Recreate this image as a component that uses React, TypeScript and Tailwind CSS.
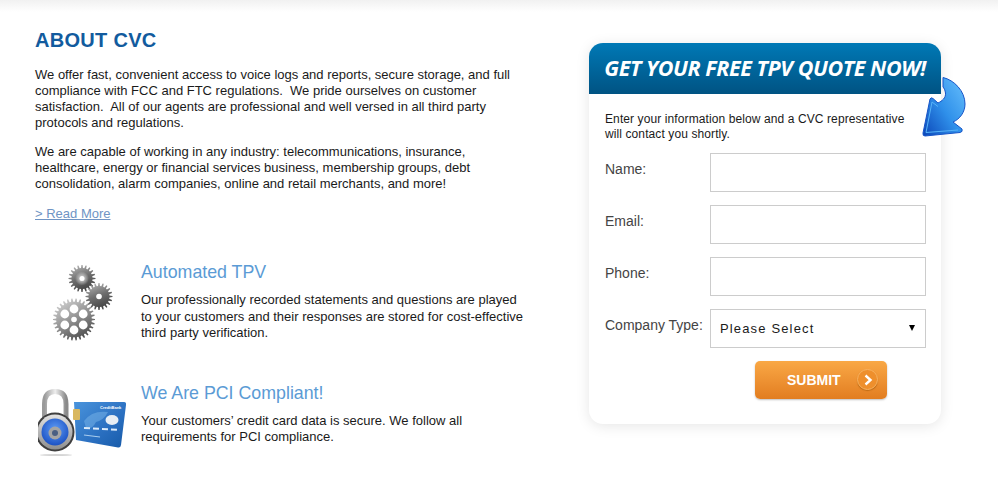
import React from "react";

const gearPath = (cx: number, cy: number, outer: number, inner: number, teeth: number) => {
	const points: string[] = [];
	const step = (Math.PI * 2) / teeth;
	for (let i = 0; i < teeth; i++) {
		const a = i * step;
		const corners: [number, number][] = [
			[inner, a - step * 0.3],
			[outer, a - step * 0.14],
			[outer, a + step * 0.14],
			[inner, a + step * 0.3],
		];
		for (const [r, t] of corners) {
			points.push(`${(cx + r * Math.cos(t)).toFixed(2)},${(cy + r * Math.sin(t)).toFixed(2)}`);
		}
	}
	return `M${points.join("L")}Z`;
};

const GearsIcon = () => (
	<svg width="64" height="76" viewBox="0 0 64 76">
		<defs>
			<linearGradient id="gearSmall" x1="0.2" y1="0" x2="0.6" y2="1">
				<stop offset="0" stopColor="#b5b5b5" />
				<stop offset="0.5" stopColor="#6e6e6e" />
				<stop offset="1" stopColor="#3f3f3f" />
			</linearGradient>
			<radialGradient id="gearGlow" cx="0.5" cy="0.5" r="0.5">
				<stop offset="0" stopColor="#e6e6e6" />
				<stop offset="1" stopColor="#e6e6e6" stopOpacity="0" />
			</radialGradient>
			<linearGradient id="gearBig" x1="0.1" y1="0" x2="0.7" y2="1">
				<stop offset="0" stopColor="#dadada" />
				<stop offset="0.55" stopColor="#8f8f8f" />
				<stop offset="1" stopColor="#4a4a4a" />
			</linearGradient>
		</defs>
		<path d={gearPath(29, 13.5, 13.5, 10.5, 20)} fill="url(#gearSmall)" />
		<circle cx="29" cy="13.5" r="7" fill="url(#gearGlow)" />
		<circle cx="29" cy="13.5" r="2.5" fill="#ffffff" />
		<path d={gearPath(46, 31.5, 13.5, 10.5, 20)} fill="url(#gearSmall)" />
		<circle cx="46" cy="31.5" r="2.8" fill="#ffffff" />
		<path d={gearPath(21, 54.5, 21, 17.8, 30)} fill="url(#gearBig)" />
		<circle cx="21" cy="54.5" r="2.8" fill="#ffffff" />
		<circle cx="21" cy="44" r="4.4" fill="#ffffff" />
		<circle cx="21" cy="65" r="4.4" fill="#ffffff" />
		<circle cx="11.8" cy="49" r="4.4" fill="#ffffff" />
		<circle cx="30.2" cy="49" r="4.4" fill="#ffffff" />
		<circle cx="11.8" cy="60" r="4.4" fill="#ffffff" />
		<circle cx="30.2" cy="60" r="4.4" fill="#ffffff" />
	</svg>
);

const LockCardIcon = () => (
	<svg width="94" height="70" viewBox="0 0 94 70">
		<defs>
			<linearGradient id="cardFill" x1="0" y1="0" x2="1" y2="1">
				<stop offset="0" stopColor="#4a94dc" />
				<stop offset="0.6" stopColor="#2a6fc0" />
				<stop offset="1" stopColor="#165aa8" />
			</linearGradient>
			<linearGradient id="shackle" x1="0" y1="0" x2="1" y2="0">
				<stop offset="0" stopColor="#9a9a9a" />
				<stop offset="0.5" stopColor="#eeeeee" />
				<stop offset="1" stopColor="#8a8a8a" />
			</linearGradient>
			<linearGradient id="bezel" x1="0" y1="0" x2="0" y2="1">
				<stop offset="0" stopColor="#e2e2e2" />
				<stop offset="1" stopColor="#8e8e8e" />
			</linearGradient>
			<radialGradient id="dial" cx="0.5" cy="0.4" r="0.6">
				<stop offset="0" stopColor="#5f9cf5" />
				<stop offset="1" stopColor="#1c52c4" />
			</radialGradient>
		</defs>
		<path d="M36 14 L86 14 Q88.5 14 88 17 L83 57 Q82.5 60 80 59.5 L38 52 Z" fill="url(#cardFill)" />
		<path d="M46 33 Q54 22 70 24 Q66 32 58 34 Q54 42 48 40 Z" fill="#7ab6ea" opacity="0.5" />
		<ellipse cx="74" cy="32" rx="6.5" ry="5" fill="#e8eef4" />
		<rect x="35" y="21" width="7" height="11" rx="1" fill="#d9b860" />
		<text x="62" y="21" fontSize="4" fontWeight="700" fill="#ffffff">CreditBank</text>
		<path d="M46 40 L82 42" stroke="#dcebfa" strokeWidth="2" strokeDasharray="6 3" />
		<path d="M46 47 L62 49" stroke="#a9cdee" strokeWidth="1.2" />
		<path d="M6.5 30 V16 Q6.5 3.5 17 3.5 Q28 3.5 28 16 V30" fill="none" stroke="url(#shackle)" strokeWidth="5" />
		<circle cx="17" cy="44" r="19.5" fill="#3f3f3f" />
		<circle cx="17" cy="44" r="17.5" fill="url(#bezel)" />
		<circle cx="17" cy="44" r="13.5" fill="url(#dial)" />
		<circle cx="17" cy="45" r="6.5" fill="#a5a5a5" />
		<circle cx="17" cy="45" r="3" fill="#4a5f82" />
		<ellipse cx="18" cy="67" rx="16" ry="1" fill="#d5d5d5" />
	</svg>
);

const ArrowIcon = () => (
	<svg width="45" height="61" viewBox="0 0 45 61">
		<defs>
			<linearGradient id="arrowFill" x1="1" y1="0.1" x2="0" y2="1">
				<stop offset="0" stopColor="#63bcfb" />
				<stop offset="0.5" stopColor="#2f90ea" />
				<stop offset="1" stopColor="#0b46b8" />
			</linearGradient>
		</defs>
		<path
			d="M21 0.5 C32 3 43 14 43 27 C43 35 38 42 31 45 L40 52 Q41 55 38 55.5 L3 59 Q0.5 59 1 56 L8 22 Q9 20 11 21.5 L16 26 C20 24 24 21 23.5 16 C23 13 22 11 21 10 Z"
			fill="url(#arrowFill)"
			stroke="#1654c8"
			strokeWidth="1"
		/>
		<path
			d="M4 55.5 L10 25 L16 29.5 M36 53 L4 55.5"
			fill="none"
			stroke="#58b4f8"
			strokeWidth="1"
		/>
	</svg>
);

const FormRow = ({ label }: { label: string }) => (
	<div className="flex items-start h-[39px] mb-[13px]">
		<label className="w-[105px] shrink-0 pt-[8px] text-[14px] leading-[16px] text-[#444444]">{label}</label>
		<input type="text" className="w-[216px] shrink-0 h-[39px] border border-[#cccccc] bg-white" />
	</div>
);

const Feature = ({
	icon,
	title,
	lines,
	className,
}: {
	icon: React.ReactNode;
	title: string;
	lines: string[];
	className: string;
}) => (
	<div className={`flex ${className}`}>
		<div className="w-[106px] shrink-0">{icon}</div>
		<div>
			<h3 className="text-[17.8px] leading-[20px] text-[#5b9bd5] mb-[10px]">{title}</h3>
			{lines.map((line) => (
				<p key={line} className="text-[13px] leading-[16.5px] text-[#1a1a1a] whitespace-pre">
					{line}
				</p>
			))}
		</div>
	</div>
);

export default function App() {
	return (
		<div className="relative w-[998px] h-[478px] overflow-hidden bg-white font-['Liberation_Sans',Arial,sans-serif]">
			<div className="h-[12px] bg-gradient-to-b from-[#f1f1f1] to-white" />
			<div className="flex pt-[16px] pl-[35px]">
				<div className="w-[554px] shrink-0">
					<h1 className="text-[20px] leading-[24px] font-bold tracking-[0.3px] text-[#125b9e] mb-[15px]">ABOUT CVC</h1>
					<div className="text-[13px] leading-[16px] text-[#1a1a1a] whitespace-pre">
						<p>
							We offer fast, convenient access to voice logs and reports, secure storage, and full{"\n"}
							compliance with FCC and FTC regulations.  We pride ourselves on customer{"\n"}
							satisfaction.  All of our agents are professional and well versed in all third party{"\n"}
							protocols and regulations.
						</p>
						<p className="mt-[13px]">
							We are capable of working in any industry: telecommunications, insurance,{"\n"}
							healthcare, energy or financial services business, membership groups, debt{"\n"}
							consolidation, alarm companies, online and retail merchants, and more!
						</p>
						<p className="mt-[14px]">
							<a href="#" className="underline text-[#6f94c4]">&gt; Read More</a>
						</p>
					</div>
					<Feature
						className="mt-[40px]"
						icon={
							<div className="ml-[18px] mt-[3px]">
								<GearsIcon />
							</div>
						}
						title="Automated TPV"
						lines={[
							"Our professionally recorded statements and questions are played",
							"to your customers and their responses are stored for cost-effective",
							"third party verification.",
						]}
					/>
					<Feature
						className="mt-[41px]"
						icon={
							<div className="ml-[3px] mt-[5px]">
								<LockCardIcon />
							</div>
						}
						title="We Are PCI Compliant!"
						lines={[
							"Your customers’ credit card data is secure. We follow all",
							"requirements for PCI compliance.",
						]}
					/>
				</div>
				<div className="relative w-[352px] h-[381px] mt-[15px] rounded-[14px] bg-white shadow-[0_2px_14px_rgba(0,0,0,0.1)]">
					<div className="absolute left-[333px] top-[34px]">
						<ArrowIcon />
					</div>
					<div className="relative h-[51px] rounded-t-[14px] bg-gradient-to-b from-[#0079b6] to-[#005383] flex items-center justify-center">
						<span className="font-['Open_Sans',sans-serif] font-bold italic text-[21.5px] tracking-[-0.42px] text-white whitespace-nowrap">
							GET YOUR FREE TPV QUOTE NOW!
						</span>
					</div>
					<div className="relative pl-[16px] pt-[18px]">
						<p className="text-[12px] leading-[15px] tracking-[0.1px] text-[#1a1a1a] mb-[11px]">
							Enter your information below and a CVC representative
							<br />
							will contact you shortly.
						</p>
						<FormRow label="Name:" />
						<FormRow label="Email:" />
						<FormRow label="Phone:" />
						<div className="flex items-start h-[39px]">
							<label className="w-[105px] shrink-0 pt-[8px] text-[14px] leading-[16px] text-[#444444] whitespace-nowrap">
								Company Type:
							</label>
							<div className="w-[216px] h-[39px] shrink-0 border border-[#cccccc] flex items-center justify-between pl-[9px] pr-[10px]">
								<span className="text-[13px] tracking-[1.15px] text-[#1a1a1a] pt-[1px]">Please Select</span>
								<span className="w-0 h-0 border-x-[3px] border-x-transparent border-t-[6px] border-t-black mb-[2px]" />
							</div>
						</div>
						<div className="flex mt-[13px] ml-[150px]">
							<button className="relative w-[132px] h-[38px] rounded-[5px] bg-gradient-to-b from-[#f9a845] to-[#e27d1f] shadow-[0_1px_2px_rgba(0,0,0,0.25)] flex items-center">
								<span className="pl-[32px] text-[14px] font-bold text-white">SUBMIT</span>
								<span className="absolute left-[102px] top-[8px] w-[21px] h-[21px] rounded-full bg-[#ee8f2c] border border-[#f9b25f] shadow-[0_1px_1px_rgba(150,80,0,0.5)] flex items-center justify-center">
									<svg width="10" height="12" viewBox="0 0 10 12">
										<path d="M2.5 1.5 L7.5 6 L2.5 10.5" fill="none" stroke="#ffffff" strokeWidth="2.4" />
									</svg>
								</span>
							</button>
						</div>
					</div>
				</div>
			</div>
		</div>
	);
}
